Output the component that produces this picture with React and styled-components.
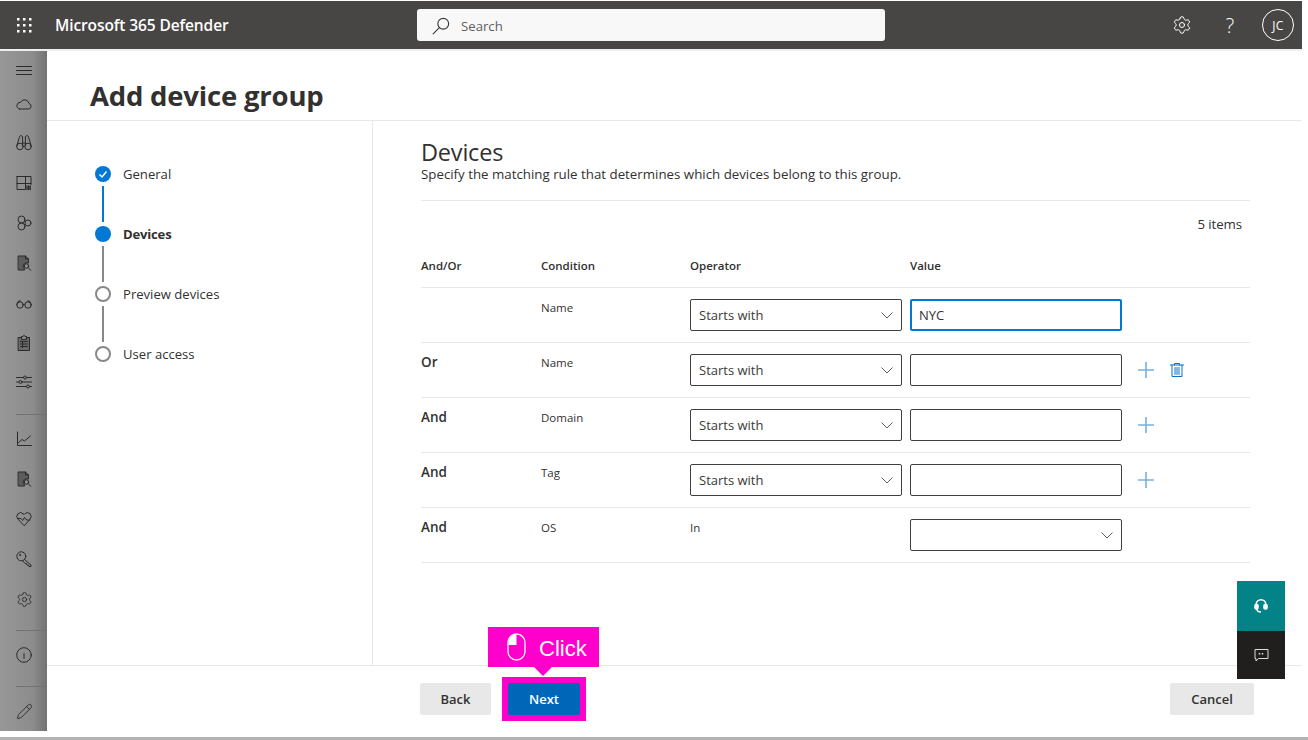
import React from "react";
import styled, { createGlobalStyle } from "styled-components";
import { Settings, Pencil } from "lucide-react";

const Global = createGlobalStyle`
  html, body { margin: 0; padding: 0; background: #fff; }
  body { font-family: "Open Sans", "Noto Sans", sans-serif; color: #323130; overflow: hidden; }
  * { box-sizing: border-box; }
`;

const Page = styled.div`
  width: 1308px;
  height: 740px;
  position: relative;
  display: flex;
  flex-direction: column;
  padding-top: 1px;
`;

const Shell = styled.div`
  width: 1302px;
  display: flex;
  flex-direction: column;
`;

const TopBar = styled.header`
  height: 48px;
  background: #484644;
  display: flex;
  align-items: center;
  color: #fff;
`;

const Brand = styled.div`
  width: 417px;
  display: flex;
  align-items: center;
  flex-shrink: 0;
`;

const Waffle = styled.div`
  width: 47px;
  display: flex;
  justify-content: center;
`;

const BrandName = styled.span`
  margin-left: 8px;
  font-size: 15.5px;
  font-weight: 600;
  letter-spacing: -0.1px;
`;

const SearchBox = styled.div`
  width: 468px;
  height: 32px;
  background: #f8f8f8;
  border-radius: 3px;
  display: flex;
  align-items: center;
  padding: 2px 0 0 15px;
  gap: 11px;
  font-size: 13.2px;
  color: #605e5c;
`;

const TopActions = styled.div`
  margin-left: auto;
  padding-right: 8px;
  display: flex;
  align-items: center;
`;

const TopButton = styled.div`
  width: 48px;
  display: flex;
  justify-content: center;
  font-size: 20px;
  font-weight: 300;
  color: #fff;
`;

const Avatar = styled.div`
  width: 32px;
  height: 32px;
  margin-left: 8px;
  border: 1px solid #fff;
  border-radius: 50%;
  display: flex;
  align-items: center;
  justify-content: center;
  font-size: 12px;
  letter-spacing: 0.3px;
`;

const Body = styled.div`
  height: 682px;
  border-top: 2px solid #efefef;
  display: flex;
`;

const Rail = styled.nav`
  width: 47px;
  flex-shrink: 0;
  background: linear-gradient(90deg, #979797 0%, #8c8c8c 70%, #727272 100%);
  display: flex;
  flex-direction: column;
`;

const RailItem = styled.div`
  height: ${(p) => p.$h || 40}px;
  padding-left: 16px;
  display: flex;
  align-items: center;
  color: #2a2a2a;
`;

const RailRule = styled.div`
  height: 1px;
  margin: ${(p) => p.$top}px 0 4px 16px;
  background: #727272;
`;

const Main = styled.main`
  flex: 1;
  display: flex;
  flex-direction: column;
  min-width: 0;
`;

const TitleBar = styled.div`
  height: 70px;
  padding: 27px 0 0 43px;
  border-bottom: 1px solid #e8e8e8;
`;

const Title = styled.h1`
  margin: 0;
  font-size: 27.5px;
  line-height: 36px;
  font-weight: 700;
  letter-spacing: -0.2px;
`;

const Split = styled.div`
  height: 545px;
  display: flex;
  border-bottom: 1px solid #e8e8e8;
`;

const Steps = styled.div`
  width: 326px;
  flex-shrink: 0;
  padding: 45px 0 0 48px;
  border-right: 1px solid #e8e8e8;
`;

const Step = styled.div`
  height: 16px;
  display: flex;
  align-items: center;
  gap: 12px;
  font-size: 13.1px;
  font-weight: ${(p) => (p.$active ? 700 : 400)};
  letter-spacing: ${(p) => (p.$active ? "-0.2px" : "0")};
`;

const Dot = styled.span`
  width: 16px;
  height: 16px;
  border-radius: 50%;
  flex-shrink: 0;
  display: flex;
  align-items: center;
  justify-content: center;
  background: ${(p) => (p.$on ? "#0078d4" : "#fff")};
  border: ${(p) => (p.$on ? "none" : "2px solid #8a8886")};
`;

const StepLine = styled.div`
  width: 2px;
  height: 36px;
  margin: 4px 0 4px 7px;
  background: ${(p) => (p.$on ? "#0078d4" : "#8a8886")};
`;

const Content = styled.section`
  width: 877px;
  padding: 16px 0 0 48px;
`;

const Heading = styled.h2`
  margin: 0;
  font-size: 23.5px;
  line-height: 30px;
  font-weight: 400;
  letter-spacing: -0.2px;
`;

const Sub = styled.p`
  margin: 0;
  height: 34px;
  font-size: 13.3px;
  line-height: 14px;
  border-bottom: 1px solid #e8e8e8;
  width: 829px;
`;

const Count = styled.div`
  width: 821px;
  margin-top: 14px;
  text-align: right;
  font-size: 13.3px;
  line-height: 18px;
  letter-spacing: -0.1px;
`;

const Row = styled.div`
  width: 829px;
  height: 55px;
  padding-top: ${(p) => (p.$head ? 25 : 11)}px;
  display: grid;
  grid-template-columns: 120px 149px 220px 228px 1fr;
  align-items: start;
  border-bottom: 1px solid #e8e8e8;
`;

const HeadCell = styled.div`
  font-size: 11.5px;
  line-height: 16px;
  font-weight: 600;
`;

const Logic = styled.div`
  margin-top: -2px;
  font-size: 13.5px;
  line-height: 20px;
  font-weight: 600;
`;

const Cell = styled.div`
  font-size: 11.5px;
  line-height: 18px;
`;

const Select = styled.div`
  width: 212px;
  height: 32px;
  border: 1px solid #3f3f3f;
  border-radius: 2px;
  padding: 0 8px;
  display: flex;
  align-items: center;
  justify-content: space-between;
  font-size: 13px;
  color: #3b3a39;
`;

const Field = styled.div`
  width: 212px;
  height: 32px;
  border: ${(p) => (p.$focus ? "2px solid #0078d4" : "1px solid #3f3f3f")};
  border-radius: 2px;
  padding: 0 ${(p) => (p.$focus ? 7 : 8)}px;
  display: flex;
  align-items: center;
  font-size: 13px;
`;

const RowTools = styled.div`
  height: 32px;
  display: flex;
  align-items: center;
  gap: 15px;
`;

const Footer = styled.footer`
  height: 65px;
  padding: 17px 48px 0 373px;
  display: flex;
  align-items: flex-start;
`;

const FootButton = styled.div`
  height: 32px;
  width: ${(p) => p.$w}px;
  border-radius: 2px;
  background: ${(p) => (p.$primary ? "#0067b8" : "#e8e8e8")};
  color: ${(p) => (p.$primary ? "#fff" : "#323130")};
  display: flex;
  align-items: center;
  justify-content: center;
  font-size: 13px;
  font-weight: 600;
`;

const Highlight = styled.div`
  margin: -6px 0 0 11px;
  padding: 6px;
  background: #ff00cc;
`;

const Spacer = styled.div`
  flex: 1;
`;

const Callout = styled.div`
  position: absolute;
  left: 488px;
  top: 627px;
  width: 111px;
  height: 40px;
  background: #ff00cc;
  color: #fff;
  display: flex;
  align-items: center;
  padding-left: 19px;
  gap: 13px;
  font-family: "Liberation Sans", Arial, sans-serif;
  font-size: 22px;

  &::after {
    content: "";
    position: absolute;
    left: 46px;
    top: 40px;
    border-left: 9px solid transparent;
    border-right: 9px solid transparent;
    border-top: 9px solid #ff00cc;
  }
`;

const CalloutText = styled.span`
  padding-top: 3px;
`;

const HelpDock = styled.div`
  position: absolute;
  left: 1237px;
  top: 581px;
  width: 48px;
  display: flex;
  flex-direction: column;
`;

const DockButton = styled.div`
  height: ${(p) => p.$h}px;
  background: ${(p) => p.$bg};
  display: flex;
  align-items: center;
  justify-content: center;
`;

const BottomEdge = styled.div`
  position: absolute;
  left: 0;
  right: 0;
  bottom: 0;
  height: 3px;
  background: #b3b3b3;
`;

const Glyph = ({ children, size = 16, fill = "none", color = "currentColor", w = 1 }) => (
  <svg width={size} height={size} viewBox="0 0 16 16" fill={fill} stroke={color} strokeWidth={w}
    strokeLinecap="round" strokeLinejoin="round">
    {children}
  </svg>
);

const Chevron = () => (
  <svg width="12" height="7" viewBox="0 0 12 7" fill="none" stroke="#605e5c" strokeWidth="1">
    <path d="M.5.5 6 6l5.500-5.500" />
  </svg>
);

const PlusMark = () => (
  <svg width="16" height="16" viewBox="0 0 16 16" fill="none" stroke="#78b0e0" strokeWidth="1.600">
    <path d="M0 8h16M8 0v16" />
  </svg>
);

const Report = () => (
  <Glyph>
    <path d="M2.500 1h7l3 3v4H10a3 3 0 0 0-2 4.800l.6 2.200H2.500z" fill="#5c5c5c" />
    <path d="M9.500 1v3h3" />
    <circle cx="10.500" cy="11" r="2.200" />
    <path d="M12.200 12.800 15 15.500" />
  </Glyph>
);

const railTop = [
  <Glyph><g transform="translate(0 -1)"><path d="M3.600 13h8.900a2.800 2.800 0 0 0 .5-5.500A4.400 4.400 0 0 0 4.700 6.300 3.400 3.400 0 0 0 3.600 13z" /></g></Glyph>,
  <Glyph>
    <circle cx="4" cy="11.500" r="3.300" />
    <circle cx="12" cy="11.500" r="3.300" />
    <path d="M.8 11 3.600 1.500a1.600 1.600 0 0 1 3 .5V11M15.200 11 12.400 1.500a1.600 1.600 0 0 0-3 .5V11M6.600 8h2.800" />
  </Glyph>,
  <Glyph>
    <path d="M1 1.500h14v8M1 1.500V14.500h8.500V1.500M1 8.500h14" />
    <path d="M11 11v3.500M12.600 11v3.500M14.200 11v3.500" strokeWidth="1.300" />
  </Glyph>,
  <Glyph>
    <circle cx="5.500" cy="4.500" r="3.500" />
    <circle cx="5.500" cy="11.500" r="3.500" />
    <circle cx="12" cy="8" r="3" />
  </Glyph>,
  <Report />,
  <Glyph>
    <circle cx="4" cy="10" r="3.200" />
    <circle cx="12" cy="10" r="3.200" />
    <path d="M7.200 9.500c.5-.7 1.100-.7 1.600 0M.8 9.500l1.700-3.500h2M15.200 9.500l-1.700-3.500h-2" />
  </Glyph>,
  <Glyph>
    <rect x="2.500" y="2.500" width="11" height="13" fill="#6a6a6a" />
    <path d="M5.500 4V1.500h1.500a1 1 0 0 1 2 0h1.500V4zM4.500 6.500h7M4.500 9h7M4.500 11.500h7M6.500 6.500v6" fill="#8c8c8c" />
  </Glyph>,
  <Glyph>
    <path d="M.5 3.500h15M.5 8h15M.5 12.500h15" />
    <circle cx="9" cy="3.500" r="1.500" fill="#8c8c8c" />
    <circle cx="4.500" cy="8" r="1.500" fill="#8c8c8c" />
    <circle cx="12" cy="12.500" r="1.500" fill="#8c8c8c" />
  </Glyph>,
];

const railMid = [
  <Glyph>
    <path d="M1.500 1v13.500h14" />
    <path d="M2.500 11.500 6 8.500l2.500 1.500L14.500 5" />
  </Glyph>,
  <Report />,
  <Glyph>
    <path d="M8 14.500 1.900 8.100a3.900 3.900 0 0 1 0-5.300 3.800 3.800 0 0 1 5.300 0l.8.800.8-.8a3.800 3.800 0 0 1 5.300 0 3.900 3.900 0 0 1 0 5.300z" />
    <path d="M2 7.500h3l1.500 2 2-3 2 2.500H14" />
  </Glyph>,
  <Glyph>
    <circle cx="5.300" cy="5.300" r="4.500" />
    <circle cx="4" cy="4" r=".5" fill="#333" />
    <path d="M8.500 8.500l6.500 5.500v1.500h-2l-.5-1.500H11l-.5-1.500H9l-2.500-3" />
  </Glyph>,
  <Settings size={17} strokeWidth={1.3} />,
];

const Search = () => (
  <Glyph size={18} color="#3b3a39">
    <circle cx="10" cy="6" r="4.800" />
    <path d="M6.600 9.400 1 15" />
  </Glyph>
);

const Trash = () => (
  <Glyph color="#0b6fc2">
    <path d="M1.500 3h13M3 3v11.500h10V3M5.500 3V1.500h5V3" />
    <path d="M6 5.500v7M8 5.500v7M10 5.500v7" />
  </Glyph>
);

const Headset = () => (
  <svg width="14" height="16" viewBox="0 0 14 16" fill="none" stroke="#fff" strokeWidth="1.600">
    <path d="M2.200 9V6.500a4.800 4.800 0 0 1 9.600 0V9" />
    <rect x="1" y="6.500" width="3" height="4.500" rx="1.200" fill="#fff" />
    <rect x="10" y="6.500" width="3" height="4.500" rx="1.200" fill="#fff" />
    <path d="M3 11c0 2.500 2 3 4 3" />
  </svg>
);

const Chat = () => (
  <svg width="15" height="15" viewBox="0 0 15 15" fill="none" stroke="#ddd" strokeWidth="1">
    <path d="M1 1.500h13v9H4.500l-2.500 2.500v-2.500H1z" />
    <path d="M5.500 5v1.500M8.500 5v1.500" strokeWidth="1.500" />
  </svg>
);

const MouseIcon = () => (
  <svg width="19" height="28" viewBox="0 0 19 28" fill="none" stroke="#fff" strokeWidth="1.300">
    <rect x="1" y="1" width="17" height="26" rx="8.500" />
    <path d="M9.500 1.500a8 8 0 0 0-8 8V12h8z" fill="#fff" stroke="none" />
  </svg>
);

const rows = [
  { logic: "", name: "Name", focus: true, value: "NYC" },
  { logic: "Or", name: "Name", plus: true, trash: true },
  { logic: "And", name: "Domain", plus: true },
  { logic: "And", name: "Tag", plus: true },
];

export default function App() {
  return (
    <Page>
      <Global />
      <Shell>
        <TopBar>
          <Brand>
            <Waffle>
              <svg width="16" height="16" viewBox="0 0 16 16" fill="#fff">
                {[1, 7, 13].flatMap((y) =>
                  [1, 7, 13].map((x) => <rect key={`${x}-${y}`} x={x} y={y} width="2.500" height="2.500" />)
                )}
              </svg>
            </Waffle>
            <BrandName>Microsoft 365 Defender</BrandName>
          </Brand>
          <SearchBox>
            <Search />
            Search
          </SearchBox>
          <TopActions>
            <TopButton><Settings size={20} strokeWidth={1.2} /></TopButton>
            <TopButton>?</TopButton>
            <Avatar>JC</Avatar>
          </TopActions>
        </TopBar>
        <Body>
          <Rail>
            <RailItem $h={36}>
              <Glyph><path d="M.5 5.500h15M.5 9.500h15M.5 13.500h15" /></Glyph>
            </RailItem>
            {railTop.map((icon, i) => (
              <RailItem key={i} $h={i === 0 ? 36 : 40}>{icon}</RailItem>
            ))}
            <RailRule $top={12} />
            {railMid.map((icon, i) => (
              <RailItem key={i}>{icon}</RailItem>
            ))}
            <RailRule $top={11} />
            <RailItem>
              <Glyph>
                <circle cx="8" cy="8" r="7.300" />
                <path d="M8 6.500v5" />
              </Glyph>
            </RailItem>
            <RailRule $top={11} />
            <RailItem><Pencil size={17} strokeWidth={1.3} /></RailItem>
          </Rail>
          <Main>
            <TitleBar>
              <Title>Add device group</Title>
            </TitleBar>
            <Split>
              <Steps>
                <Step>
                  <Dot $on>
                    <svg width="10" height="10" viewBox="0 0 10 10" fill="none" stroke="#fff" strokeWidth="1.500">
                      <path d="M1.500 5.500 4 8l4.500-5.500" />
                    </svg>
                  </Dot>
                  General
                </Step>
                <StepLine $on />
                <Step $active><Dot $on />Devices</Step>
                <StepLine />
                <Step><Dot />Preview devices</Step>
                <StepLine />
                <Step><Dot />User access</Step>
              </Steps>
              <Content>
                <Heading>Devices</Heading>
                <Sub>Specify the matching rule that determines which devices belong to this group.</Sub>
                <Count>5 items</Count>
                <Row $head>
                  <HeadCell>And/Or</HeadCell>
                  <HeadCell>Condition</HeadCell>
                  <HeadCell>Operator</HeadCell>
                  <HeadCell>Value</HeadCell>
                </Row>
                {rows.map((r, i) => (
                  <Row key={i}>
                    <Logic>{r.logic}</Logic>
                    <Cell>{r.name}</Cell>
                    <Select>
                      Starts with
                      <Chevron />
                    </Select>
                    <Field $focus={r.focus}>{r.value}</Field>
                    <RowTools>
                      {r.plus && <PlusMark />}
                      {r.trash && <Trash />}
                    </RowTools>
                  </Row>
                ))}
                <Row>
                  <Logic>And</Logic>
                  <Cell>OS</Cell>
                  <Cell>In</Cell>
                  <Select>
                    <span />
                    <Chevron />
                  </Select>
                </Row>
              </Content>
            </Split>
            <Footer>
              <FootButton $w={71}>Back</FootButton>
              <Highlight><FootButton $primary $w={72}>Next</FootButton></Highlight>
              <Spacer />
              <FootButton $w={84}>Cancel</FootButton>
            </Footer>
          </Main>
        </Body>
      </Shell>
      <Callout>
        <MouseIcon />
        <CalloutText>Click</CalloutText>
      </Callout>
      <HelpDock>
        <DockButton $h={50} $bg="#038387"><Headset /></DockButton>
        <DockButton $h={48} $bg="#201f1e"><Chat /></DockButton>
      </HelpDock>
      <BottomEdge />
    </Page>
  );
}
